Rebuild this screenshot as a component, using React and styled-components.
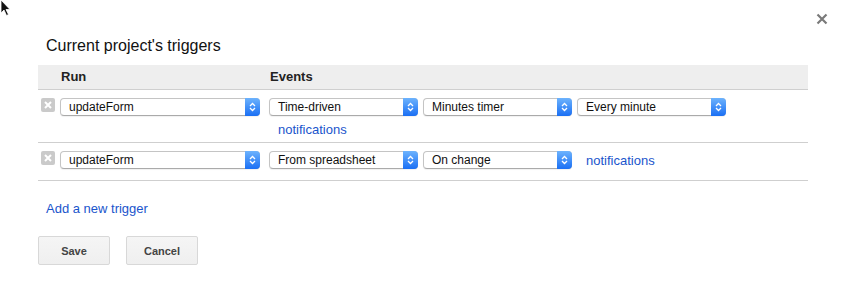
import React from 'react';
import styled, { createGlobalStyle } from 'styled-components';

const Global = createGlobalStyle`
  html, body {
    margin: 0;
    padding: 0;
    background: #fff;
  }
  body {
    font-family: "Liberation Sans", Arial, sans-serif;
    color: #222;
  }
`;

const triggers = [
  { fn: 'updateForm', events: ['Time-driven', 'Minutes timer', 'Every minute'] },
  { fn: 'updateForm', events: ['From spreadsheet', 'On change'] },
];

const Page = styled.div`
  position: relative;
  width: 844px;
  height: 290px;
  box-sizing: border-box;
  padding: 36px 36px 0 38px;
  overflow: hidden;
`;

const Pointer = styled.svg`
  position: absolute;
  left: 0;
  top: 0;
`;

const Close = styled.svg`
  position: absolute;
  left: 816px;
  top: 13px;
`;

const Title = styled.h2`
  margin: 0 0 9px 8px;
  font-size: 16px;
  line-height: 20px;
  font-weight: normal;
  color: #111;
`;

const Table = styled.div`
  width: 770px;
`;

const Grid = styled.div`
  display: grid;
  grid-template-columns: 22px 209px 1fr;
  box-sizing: border-box;
`;

const Header = styled(Grid)`
  height: 25px;
  align-items: center;
  background: #eeeeee;
  border-bottom: 1px solid #cfcfcf;
  font-size: 13px;
  font-weight: bold;
  color: #222;
  padding-bottom: 1px;
`;

const HeadCell = styled.div`
  padding-left: ${(p) => p.$indent || 0}px;
`;

const Row = styled(Grid)`
  min-height: 38px;
  padding: 8px 0 5px;
  border-bottom: 1px solid #cfcfcf;
  align-items: start;
`;

const Remove = styled.div`
  width: 14px;
  height: 14px;
  margin: 0 0 0 3px;
  border-radius: 2px;
  background: #cacaca;
  display: flex;
  align-items: center;
  justify-content: center;
`;

const Events = styled.div`
  display: flex;
  flex-wrap: wrap;
  align-items: center;
  column-gap: 5px;
  row-gap: 6px;
`;

const Select = styled.div`
  position: relative;
  width: ${(p) => p.$width}px;
  height: 18px;
  box-sizing: border-box;
  border: 1px solid #c4c4c4;
  border-bottom-color: #aaa;
  border-radius: 4px;
  background: #fff;
  font-size: 12px;
  line-height: 17px;
  padding-left: 8px;
  color: #111;
  box-shadow: 0 1px 1px rgba(0, 0, 0, 0.06);
`;

const Arrow = styled.div`
  position: absolute;
  right: -1px;
  top: -1px;
  bottom: -1px;
  width: 15px;
  border-radius: 0 4px 4px 0;
  background: linear-gradient(#6db3fd, #1a6ff4);
  display: flex;
  align-items: center;
  justify-content: center;
`;

const Link = styled.a`
  color: #1a55cc;
  font-size: 13px;
  line-height: 15px;
  text-decoration: none;
  margin-left: ${(p) => p.$indent || 0}px;
  cursor: pointer;
`;

const AddLink = styled(Link)`
  display: block;
  margin: 20px 0 0 8px;
  line-height: 16px;
`;

const Actions = styled.div`
  display: flex;
  gap: 16px;
  margin-top: 19px;
`;

const Button = styled.button`
  width: ${(p) => p.$width}px;
  height: 29px;
  border: 1px solid #d8d8d8;
  border-radius: 2px;
  background: linear-gradient(#f5f5f5, #efefef);
  font-family: "Liberation Sans", Arial, sans-serif;
  font-size: 11px;
  font-weight: bold;
  color: #444;
  padding: 0;
`;

const Chevrons = () => (
  <svg width="7" height="10" viewBox="0 0 7 10">
    <path d="M1 4 L3.5 1.5 L6 4 M1 6 L3.5 8.5 L6 6" fill="none" stroke="#fff" strokeWidth="1.3" />
  </svg>
);

const Dropdown = ({ value, width }) => (
  <Select $width={width}>
    {value}
    <Arrow>
      <Chevrons />
    </Arrow>
  </Select>
);

const App = () => (
  <Page>
    <Global />
    <Pointer width="12" height="18" viewBox="0 0 12 18">
      <path d="M1 0 L1 13 L4 10 L6.5 15.5 L8.5 14.5 L6 9.5 L10 9.5 Z" fill="#111" stroke="#fff" strokeWidth="0.8" />
    </Pointer>
    <Close width="12" height="12" viewBox="0 0 12 12">
      <path d="M1.5 1.5 L10.5 10.5 M10.5 1.5 L1.5 10.5" stroke="#7a7a7a" strokeWidth="2.2" />
    </Close>
    <Title>Current project's triggers</Title>
    <Table>
      <Header>
        <span />
        <HeadCell $indent={1}>Run</HeadCell>
        <HeadCell $indent={1}>Events</HeadCell>
      </Header>
      {triggers.map((t, i) => (
        <Row key={i}>
          <Remove>
            <svg width="8" height="8" viewBox="0 0 8 8">
              <path d="M1 1 L7 7 M7 1 L1 7" stroke="#fff" strokeWidth="2" />
            </svg>
          </Remove>
          <Dropdown value={t.fn} width={200} />
          <Events>
            {t.events.map((e) => (
              <Dropdown key={e} value={e} width={149} />
            ))}
            <Link $indent={9}>notifications</Link>
          </Events>
        </Row>
      ))}
    </Table>
    <AddLink>Add a new trigger</AddLink>
    <Actions>
      <Button $width={72}>Save</Button>
      <Button $width={72}>Cancel</Button>
    </Actions>
  </Page>
);

export default App;
